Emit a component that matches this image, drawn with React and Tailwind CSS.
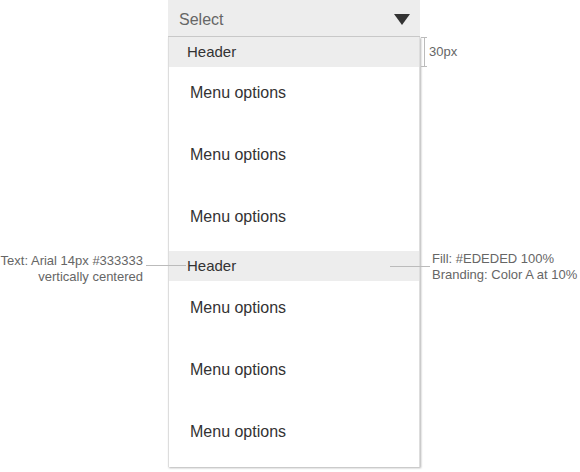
const options = ['Menu options', 'Menu options', 'Menu options'];

// one section of the dropdown: a grey header and its options
const Group = ({ title, rows, pad }) => (
  <div>
    <div className="h-[30px] bg-[#ededed] flex items-center pl-[18px] text-[15px] text-[#333333]">
      {title}
    </div>
    {options.map((label, i) => (
      <div key={i} className={`${rows[i]} ${pad} pl-[21px] text-[16px] leading-6 text-[#333333]`}>
        {label}
      </div>
    ))}
  </div>
);

export default function App() {
  return (
    <div className="relative w-[580px] h-[472px] bg-white overflow-hidden" style={{ fontFamily: '"Liberation Sans", Arial, sans-serif' }}>
      <div className="ml-[168px] w-[252px]">
        {/* Select trigger */}
        <div className="h-[37px] bg-[#ededed] border-b border-[#cccccc] flex items-center justify-between pl-[11px] pr-[10px]">
          <span className="mt-[4px] text-[16px] text-[#666666]">Select</span>
          <svg className="mt-[2px]" width="16" height="11" viewBox="0 0 16 11">
            <path d="M0 0 L16 0 L8 11 Z" fill="#333333" />
          </svg>
        </div>
        {/* Dropdown panel */}
        <div className="bg-white border-x border-[#dddddd] shadow-[1px_1px_2px_rgba(0,0,0,0.3)]">
          <Group title="Header" rows={['h-[62px]', 'h-[62px]', 'h-[60px]']} pad="pt-[14px]" />
          <Group title="Header" rows={['h-[62px]', 'h-[62px]', 'h-[62px]']} pad="pt-[15px]" />
        </div>
      </div>

      {/* 30px bracket */}
      <div className="absolute left-[421px] top-[37px] flex items-center gap-[2px]">
        <div className="h-[30px] w-[6px] border-y border-[#bbbbbb]">
          <div className="mx-auto w-px h-full bg-[#bbbbbb]" />
        </div>
        <span className="text-[13px] text-[#666666] leading-4">30px</span>
      </div>

      {/* Left annotation */}
      <div className="absolute right-[437px] top-[253px] text-right text-[13px] leading-4 text-[#666666] whitespace-nowrap">
        <div>Text: Arial 14px #333333</div>
        <div>vertically centered</div>
      </div>
      <div className="absolute left-[146px] top-[265px] w-[40px] h-px bg-[#bbbbbb]" />

      {/* Right annotation */}
      <div className="absolute left-[390px] top-[251px] flex items-start gap-[2px]">
        <div className="mt-[15px] w-[40px] h-px bg-[#bbbbbb]" />
        <div className="text-[13px] leading-4 text-[#666666] whitespace-nowrap">
          <div>Fill: #EDEDED 100%</div>
          <div>Branding: Color A at 10%</div>
        </div>
      </div>
    </div>
  );
}
